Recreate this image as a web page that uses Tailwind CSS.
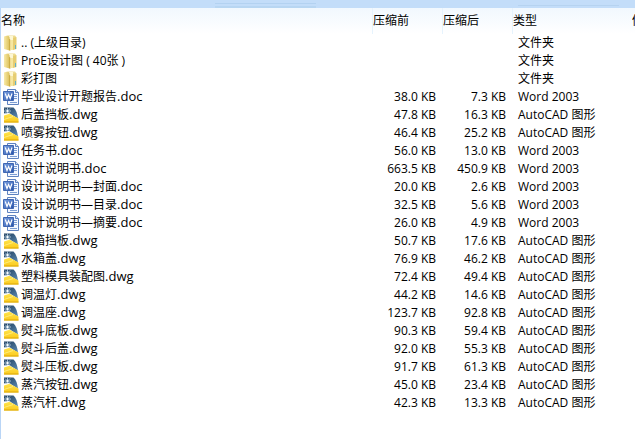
<!DOCTYPE html>
<html lang="zh-CN">
<head>
    <meta charset="UTF-8">
    <meta name="viewport" content="width=device-width, initial-scale=1.0">
    <title>文件列表</title>
    <script src="https://cdn.jsdelivr.net/npm/@tailwindcss/browser@4"></script>
</head>
<body class="bg-white min-h-screen flex flex-col overflow-hidden text-xs text-black font-['Open_Sans','Noto_Sans_CJK_SC',sans-serif]">
    <!-- Icons -->
    <svg class="absolute size-0" aria-hidden="true">
        <defs>
            <linearGradient id="gold" x1="0" x2="1" y1="0" y2="0">
                <stop offset="0" stop-color="#f8eaa8"/>
                <stop offset="1" stop-color="#dcc05a"/>
            </linearGradient>
            <linearGradient id="navy" x1="0" x2="1" y1="0" y2="1">
                <stop offset="0" stop-color="#1d3c5c"/>
                <stop offset="1" stop-color="#5f8db4"/>
            </linearGradient>
            <linearGradient id="yellow" x1="0" x2="0" y1="0" y2="1">
                <stop offset="0" stop-color="#ffe44c"/>
                <stop offset="1" stop-color="#fbc91c"/>
            </linearGradient>
            <linearGradient id="blue" x1="0" x2="1" y1="0" y2="1">
                <stop offset="0" stop-color="#7fa5e4"/>
                <stop offset="1" stop-color="#2450a8"/>
            </linearGradient>
        </defs>
        <symbol id="folder" viewBox="0 0 16 16">
            <path d="M5 .5h7l1 1v12H5z" fill="#eedc90"/>
            <path d="M6 1h4v12H6z" fill="#fdf7d4"/>
            <path d="M1 1.500 4.500 .5 6.500 2v13.500L1 14z" fill="url(#gold)"/>
            <path d="M6 3.500 7.500 5v10.500H6z" fill="#cdae45"/>
            <path d="M7.500 5h3v10h-3z" fill="#f6e7a0"/>
            <path d="M10 3l3.500-1v12L10 15z" fill="#e6cd72"/>
            <path d="M12 10h1v4h-1z" fill="#5fb0cc"/>
        </symbol>
        <symbol id="doc" viewBox="0 0 16 16">
            <path d="M4.500 .5h8l3 3v12h-11z" fill="#f4f8ff" stroke="#5f83c0"/>
            <path d="M12.500 .5v3h3" fill="#cfdef5" stroke="#5f83c0"/>
            <path d="M11 5.500h3M11 7.500h3M11 9.500h3M7 13.500h7" stroke="#7c9dd2"/>
            <path d="M.5 2.500h10v9H.5z" fill="url(#blue)" stroke="#3f66b2"/>
            <path d="M2.300 4.500 4 9.500 5.600 5.500 7.200 9.500 9 4.500" fill="none" stroke="#fff" stroke-width="1.200"/>
        </symbol>
        <symbol id="dwg" viewBox="0 0 16 16">
            <path d="M1 .5h9.500q3.500 3 4.500 11L7 8 1 7z" fill="url(#navy)"/>
            <path d="M4.500 .5v7M1 4h7M2 1.500l5 5M7 1.500l-5 5" stroke="#c3daec" stroke-width=".8"/>
            <circle cx="4.500" cy="4" r="1" fill="#fff"/>
            <path d="M1 9V6.500L6 6l8 5z" fill="#fff"/>
            <path d="M1 8.500 6.500 6.800 15.500 11.500v4H1z" fill="url(#yellow)"/>
            <path d="M1 12.500 10 9.500" stroke="#fff08a" stroke-width=".8"/>
            <path d="M1 15h14.500" stroke="#dba90c"/>
        </symbol>
    </svg>

    <div class="h-2 shrink-0 bg-[#c3ddf9] flex">
        <div class="w-[101px] h-[5px] mt-auto ml-[215px] border-t border-[#b3d2f1] flex flex-col justify-end">
            <div class="h-0.5 bg-[#b8d6f2]"></div>
        </div>
        <div class="w-[101px] h-px mt-[5px] ml-[202px] bg-[#b6d3f0]"></div>
    </div>

    <div class="grow border-l border-[#b9d5f6]">
        <table class="w-full table-fixed border-separate border-spacing-0">
            <colgroup>
                <col>
                <col class="w-[70px]">
                <col class="w-[70px]">
                <col class="w-[120px]">
                <col class="w-[3px]">
            </colgroup>
            <thead>
                <tr class="h-[26px] bg-linear-to-b from-[#f1f8fe] to-white text-left whitespace-nowrap">
                    <th class="p-0 font-normal">名称</th>
                    <th class="p-0 font-normal border-l border-[#e6f3fd]">压缩前</th>
                    <th class="p-0 font-normal border-l border-[#e6f3fd]">压缩后</th>
                    <th class="p-0 font-normal border-l border-[#e6f3fd]">类型</th>
                    <th class="p-0 font-normal overflow-hidden">修改时间</th>
                </tr>
            </thead>
            <tbody id="files"></tbody>
        </table>
    </div>

    <script>
        // icon, name, extension, size, packed size
        const files = [
            ['folder', '.. (上级目录)', '', '', ''],
            ['folder', 'ProE设计图 ( 40张 )', '', '', ''],
            ['folder', '彩打图', '', '', ''],
            ['doc', '毕业设计开题报告', '.doc', '38.0 KB', '7.3 KB'],
            ['dwg', '后盖挡板', '.dwg', '47.8 KB', '16.3 KB'],
            ['dwg', '喷雾按钮', '.dwg', '46.4 KB', '25.2 KB'],
            ['doc', '任务书', '.doc', '56.0 KB', '13.0 KB'],
            ['doc', '设计说明书', '.doc', '663.5 KB', '450.9 KB'],
            ['doc', '设计说明书—封面', '.doc', '20.0 KB', '2.6 KB'],
            ['doc', '设计说明书—目录', '.doc', '32.5 KB', '5.6 KB'],
            ['doc', '设计说明书—摘要', '.doc', '26.0 KB', '4.9 KB'],
            ['dwg', '水箱挡板', '.dwg', '50.7 KB', '17.6 KB'],
            ['dwg', '水箱盖', '.dwg', '76.9 KB', '46.2 KB'],
            ['dwg', '塑料模具装配图', '.dwg', '72.4 KB', '49.4 KB'],
            ['dwg', '调温灯', '.dwg', '44.2 KB', '14.6 KB'],
            ['dwg', '调温座', '.dwg', '123.7 KB', '92.8 KB'],
            ['dwg', '熨斗底板', '.dwg', '90.3 KB', '59.4 KB'],
            ['dwg', '熨斗后盖', '.dwg', '92.0 KB', '55.3 KB'],
            ['dwg', '熨斗压板', '.dwg', '91.7 KB', '61.3 KB'],
            ['dwg', '蒸汽按钮', '.dwg', '45.0 KB', '23.4 KB'],
            ['dwg', '蒸汽杆', '.dwg', '42.3 KB', '13.3 KB'],
        ];
        const types = { folder: '文件夹', doc: 'Word 2003', dwg: 'AutoCAD 图形' };

        document.getElementById('files').innerHTML = files.map(([icon, name, ext, size, packed]) => `
            <tr class="h-[18px] leading-[18px] whitespace-nowrap">
                <td class="p-0">
                    <div class="flex items-center pl-0.5 gap-0.5 h-[18px]">
                        <svg class="size-4 shrink-0"><use href="#${icon}"/></svg>
                        <span>${name}<span class="text-[13px] leading-none">${ext}</span></span>
                    </div>
                </td>
                <td class="p-0 pr-1.5 text-right">${size}</td>
                <td class="p-0 pr-1.5 text-right">${packed}</td>
                <td class="p-0 pl-1.5">${types[icon]}</td>
                <td class="p-0"></td>
            </tr>`).join('');
    </script>
</body>
</html>
